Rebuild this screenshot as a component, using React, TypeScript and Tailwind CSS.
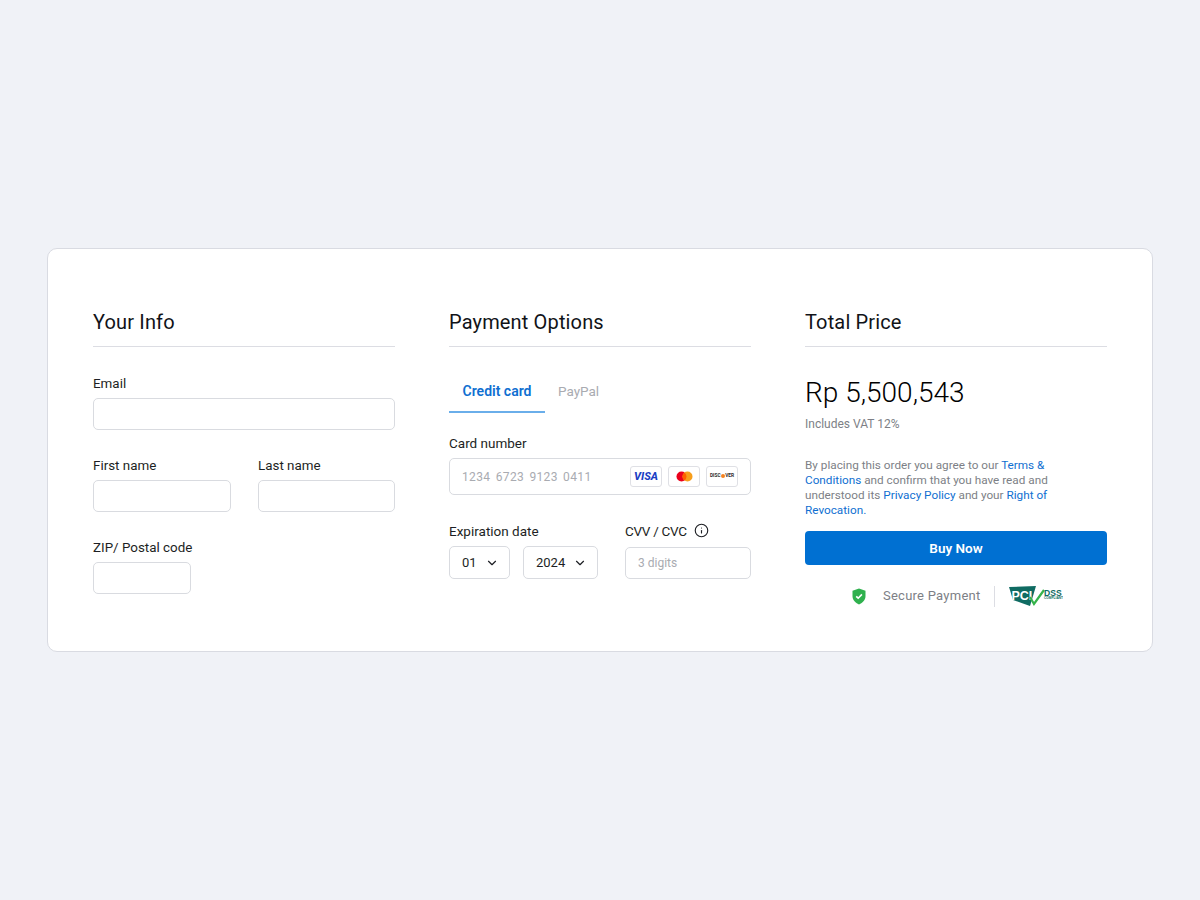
import { ChevronDown, Info } from "lucide-react";

const font = { fontFamily: 'Roboto, "Noto Sans", sans-serif' };

function Heading({ children }: { children: React.ReactNode }) {
  return (
    <h2 className="h-[40px] border-b border-[#dcdde3] text-[20px] leading-[30px] tracking-[0.15px] text-[#111318]">
      {children}
    </h2>
  );
}

function Field({ label, className }: { label: string; className: string }) {
  return (
    <div className={className}>
      <label className="block h-[25px] whitespace-nowrap text-[13.4px] leading-[22px] text-[#1d1f24]">{label}</label>
      <div className="h-[32px] rounded-[5px] border border-[#d9dbe0] bg-white" />
    </div>
  );
}

function SelectBox({ value, className }: { value: string; className: string }) {
  return (
    <div className={`flex h-[33px] items-center justify-between rounded-[5px] border border-[#d9dbe0] pl-[12px] pr-[10px] text-[13px] text-[#1d1f24] ${className}`}>
      <span>{value}</span>
      <ChevronDown className="h-[14px] w-[14px]" strokeWidth={2} />
    </div>
  );
}

function CardBadge({ children }: { children: React.ReactNode }) {
  return (
    <div className="flex h-[21px] w-[32px] items-center justify-center rounded-[3px] border border-[#dfe0e5] bg-white">
      {children}
    </div>
  );
}

function YourInfo() {
  return (
    <section className="w-[302px]">
      <Heading>Your Info</Heading>
      <Field label="Email" className="mt-[26px]" />
      <div className="mt-[25px] flex gap-[27px]">
        <Field label="First name" className="w-[138px]" />
        <Field label="Last name" className="w-[137px]" />
      </div>
      <Field label="ZIP/ Postal code" className="mt-[25px] w-[98px]" />
    </section>
  );
}

function PaymentOptions() {
  return (
    <section className="w-[302px]">
      <Heading>Payment Options</Heading>
      <div className="mt-[26px] flex gap-[13px] leading-[20px]">
        <div className="h-[40px] w-[96px] border-b-2 border-[#6aaeea] pt-[8px] text-center text-[14px] font-semibold text-[#0f6fd1]">
          Credit card
        </div>
        <div className="pt-[8px] text-[13.5px] text-[#a9abb1]">PayPal</div>
      </div>
      <label className="mt-[20px] block h-[25px] text-[13.5px] leading-[20px] text-[#1d1f24]">Card number</label>
      <div className="flex h-[37px] items-center justify-between rounded-[5px] border border-[#d9dbe0] pl-[12px] pr-[12px]">
        <span className="text-[12px] tracking-[0.35px] text-[#a9abb1]" style={{ wordSpacing: "2px" }}>
          1234 6723 9123 0411
        </span>
        <div className="flex gap-[6px]">
          <CardBadge>
            <span className="text-[11px] font-extrabold italic leading-none text-[#1b3ec4]">VISA</span>
          </CardBadge>
          <CardBadge>
            <svg width="17" height="11" viewBox="0 0 17 11">
              <circle cx="5.5" cy="5.5" r="5" fill="#eb001b" />
              <circle cx="11.5" cy="5.5" r="5" fill="#f79e1b" />
              <path d="M8.5 1.5a5 5 0 0 1 0 8a5 5 0 0 1 0-8z" fill="#ff5f00" />
            </svg>
          </CardBadge>
          <CardBadge>
            <span className="flex items-center text-[4.8px] font-bold leading-none text-[#2a2a2a]">
              DISC<span className="mx-[0.3px] inline-block h-[4px] w-[4px] rounded-full bg-[#f58220]" />VER
            </span>
          </CardBadge>
        </div>
      </div>
      <div className="mt-[26px] flex">
        <div className="w-[176px]">
          <label className="block h-[25px] text-[13.5px] leading-[20px] text-[#1d1f24]">Expiration date</label>
          <div className="flex gap-[13px]">
            <SelectBox value="01" className="w-[61px]" />
            <SelectBox value="2024" className="w-[75px]" />
          </div>
        </div>
        <div className="w-[126px]">
          <label className="flex h-[26px] items-start gap-[7px] text-[13.5px] leading-[20px] tracking-[-0.3px] text-[#1d1f24]">
            CVV / CVC
            <Info className="mt-[2px] h-[15px] w-[15px]" strokeWidth={1.8} />
          </label>
          <div className="flex h-[32px] items-center rounded-[5px] border border-[#d9dbe0] pl-[12px] text-[12px] text-[#a9abb1]">
            3 digits
          </div>
        </div>
      </div>
    </section>
  );
}

function TotalPrice() {
  return (
    <section className="w-[302px]">
      <Heading>Total Price</Heading>
      <p className="mt-[26px] h-[40px] text-[28px] font-light leading-[40px] text-black">Rp 5,500,543</p>
      <p className="mt-[3px] text-[12px] leading-[16px] text-[#7d7f86]">Includes VAT 12%</p>
      <p className="mt-[26px] w-[246px] text-[11.75px] leading-[15px] text-[#7d7f86]">
        By placing this order you agree to our <a className="text-[#0f6fd1]">Terms &amp; Conditions</a> and confirm that you have read and understood its <a className="text-[#0f6fd1]">Privacy Policy</a> and your <a className="text-[#0f6fd1]">Right of Revocation.</a>
      </p>
      <button className="mt-[13px] h-[34px] w-full rounded-[4px] bg-[#0070d2] pt-[1px] text-[13.5px] font-semibold text-white">
        Buy Now
      </button>
      <div className="mt-[20px] flex h-[22px] items-center pl-[47px]">
        <svg width="14" height="17" viewBox="0 0 14 17">
          <path d="M7 0.5 13.5 2.8V8c0 4-2.7 6.8-6.5 8.5C3.2 14.8.5 12 .5 8V2.8z" fill="#2fb14e" />
          <path d="M4.2 8.3 6.2 10.2 9.9 6.4" fill="none" stroke="#fff" strokeWidth="1.6" />
        </svg>
        <span className="ml-[17px] w-[97px] whitespace-nowrap text-[13px] tracking-[0.25px] text-[#7d7f86]">Secure Payment</span>
        <div className="ml-[14px] h-[21px] w-px bg-[#dcdde3]" />
        <svg className="ml-[14px]" width="54" height="22" viewBox="0 0 54 22">
          <path d="M0 2 27 1 21 21 4 15z" fill="#0f6b62" />
          <text x="2.5" y="14.5" fontSize="12.5" fontWeight="800" fill="#fff" fontFamily="Liberation Sans">PCI</text>
          <path d="M21 12 25 19 35 5" fill="none" stroke="#35b34a" strokeWidth="2.2" />
          <text x="35" y="10.5" fontSize="8.6" fontWeight="800" fill="#0f6b62" fontFamily="Liberation Sans">DSS</text>
          <text x="35" y="14" fontSize="3.2" fontWeight="700" fill="#0f6b62" fontFamily="Liberation Sans">COMPLIANT</text>
        </svg>
      </div>
    </section>
  );
}

export default function App() {
  return (
    <div className="flex min-h-screen items-center justify-center bg-[#f0f2f7]" style={font}>
      <main className="flex h-[404px] w-[1106px] gap-[54px] rounded-[10px] border border-[#d9dbe2] bg-white px-[45px] pt-[58px]">
        <YourInfo />
        <PaymentOptions />
        <TotalPrice />
      </main>
    </div>
  );
}
